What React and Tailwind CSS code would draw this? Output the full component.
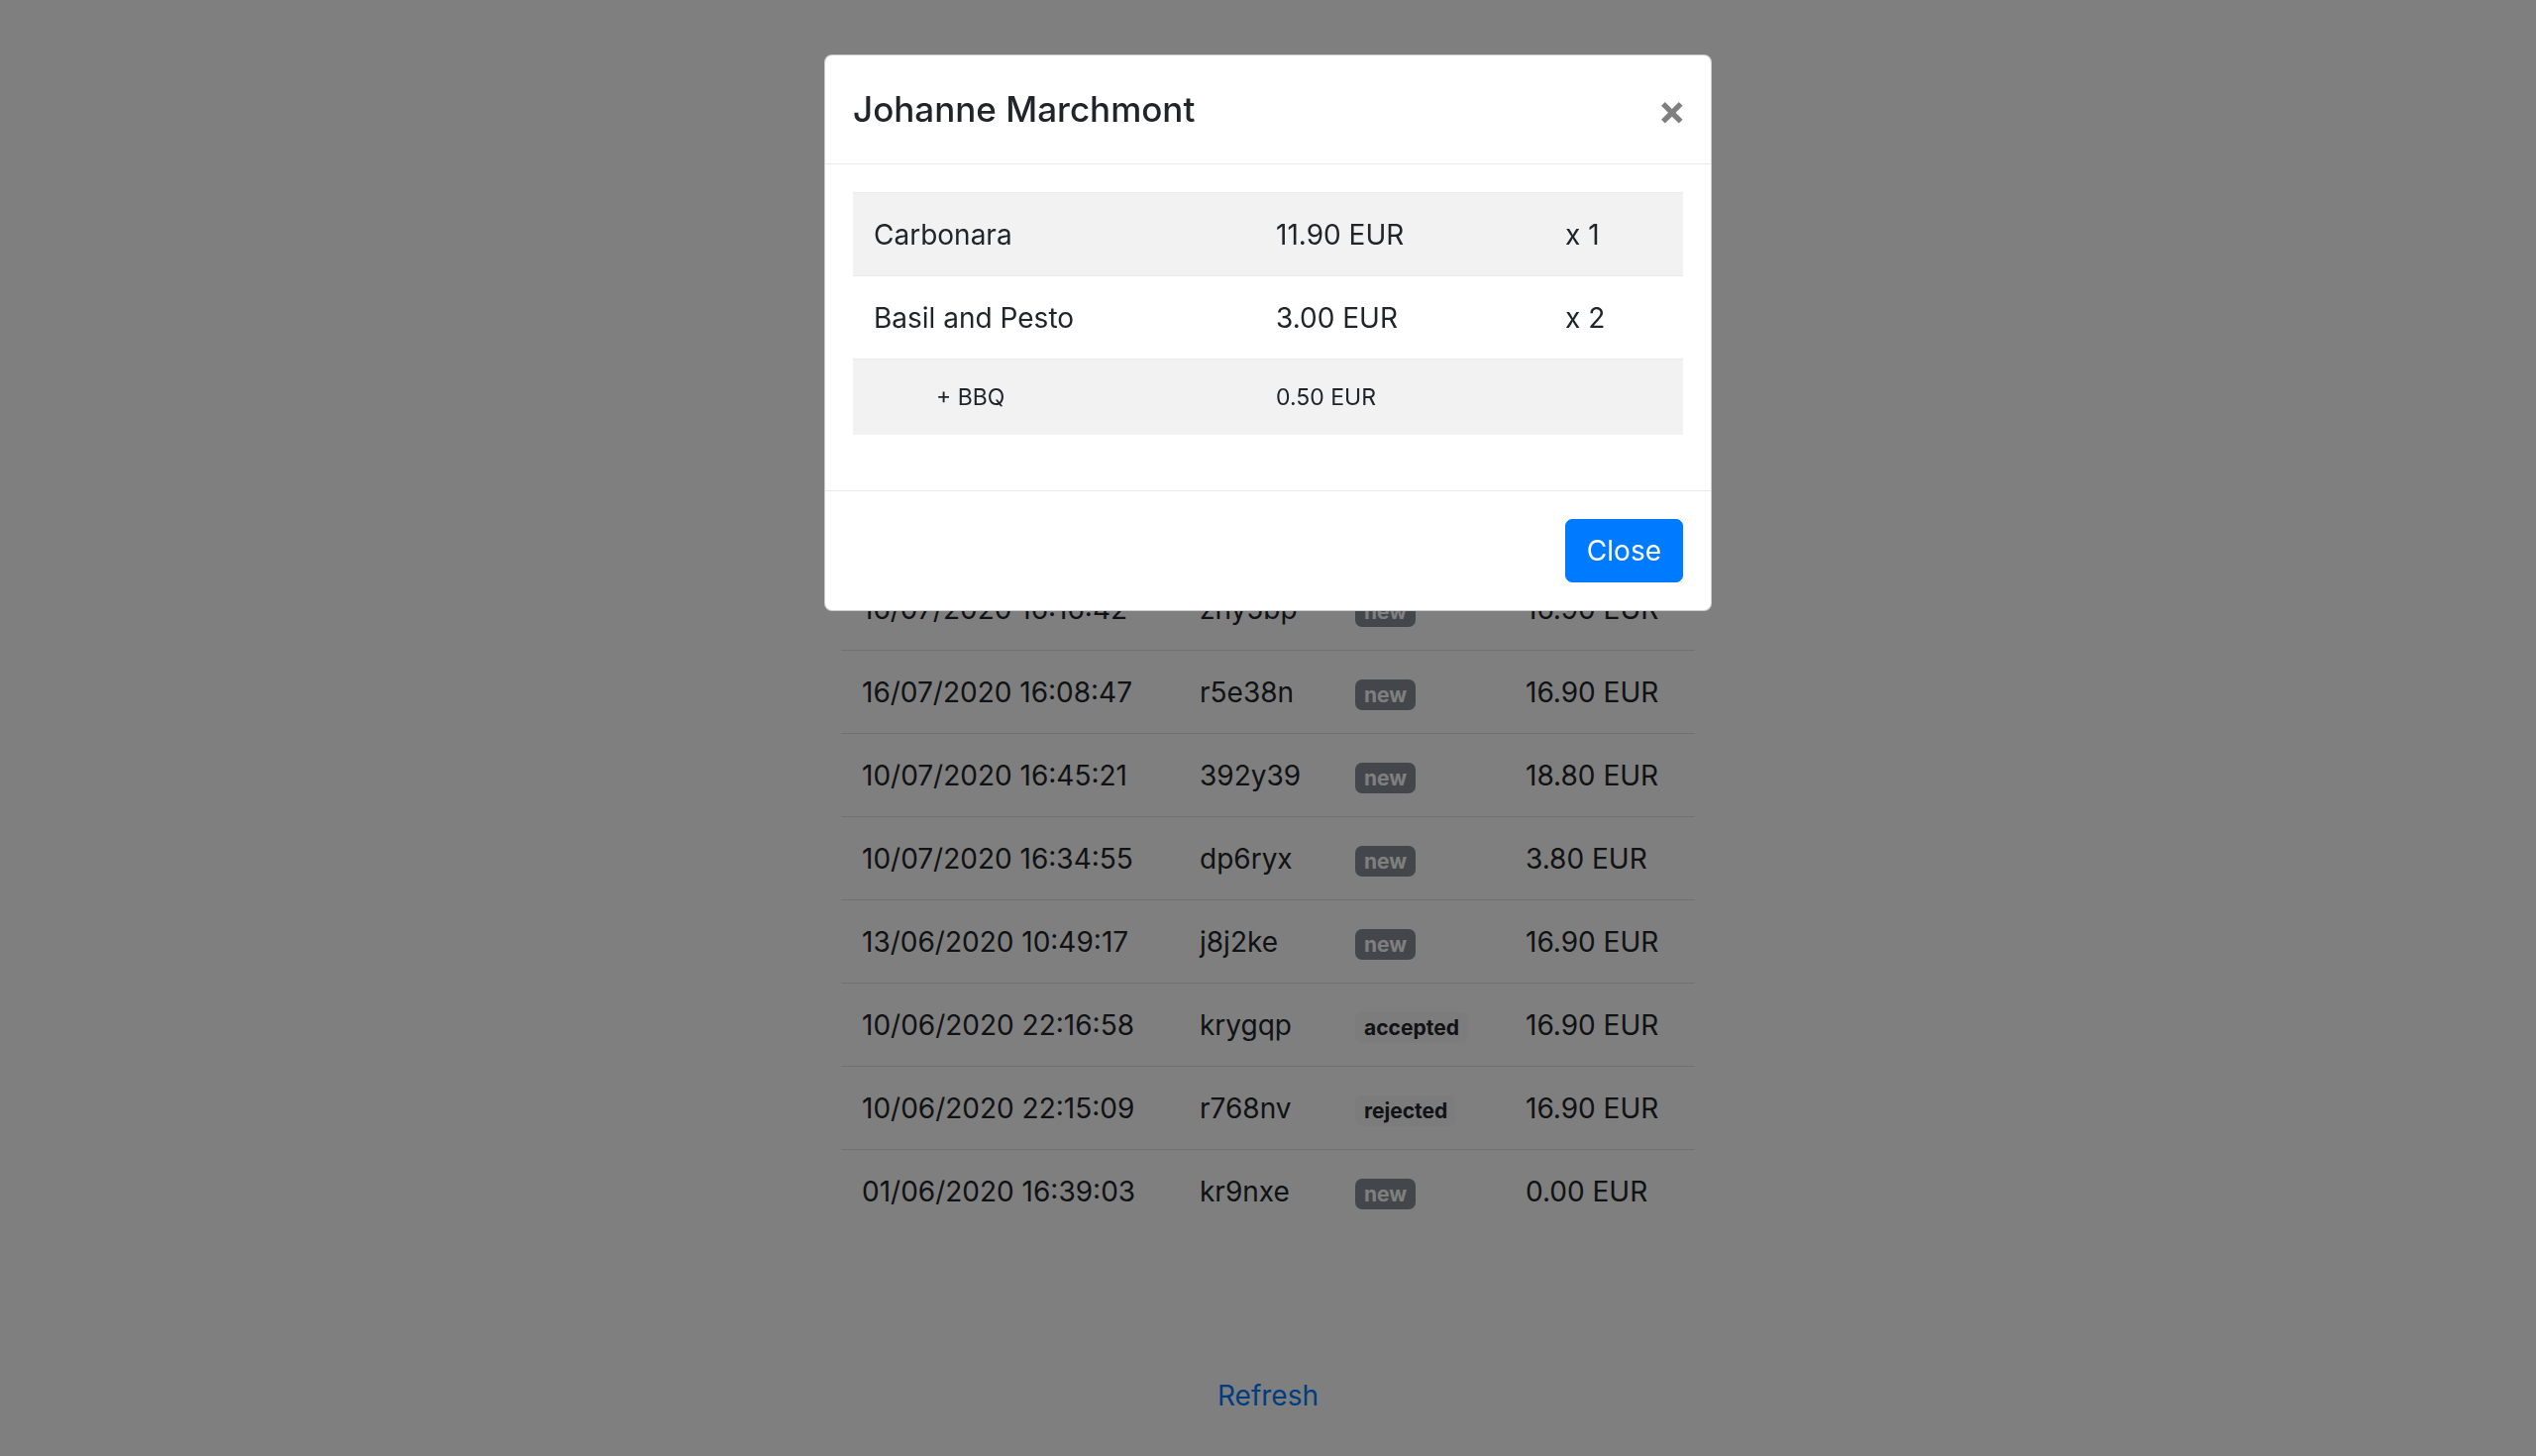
import React from 'react';

const orders = [
  { date: 'Date', code: 'Code', status: null, total: 'Total', head: true },
  { date: '17/07/2020 11:02:13', code: 'q7m2xa', status: 'new', total: '16.90 EUR' },
  { date: '17/07/2020 10:41:50', code: 'b3k9wd', status: 'new', total: '12.40 EUR' },
  { date: '16/07/2020 18:22:05', code: 'h6t1pc', status: 'new', total: '16.90 EUR' },
  { date: '16/07/2020 17:03:31', code: 'n2v8ru', status: 'new', total: '9.80 EUR' },
  { date: '16/07/2020 16:16:42', code: 'zhy5bp', status: 'new', total: '16.90 EUR' },
  { date: '16/07/2020 16:08:47', code: 'r5e38n', status: 'new', total: '16.90 EUR' },
  { date: '10/07/2020 16:45:21', code: '392y39', status: 'new', total: '18.80 EUR' },
  { date: '10/07/2020 16:34:55', code: 'dp6ryx', status: 'new', total: '3.80 EUR' },
  { date: '13/06/2020 10:49:17', code: 'j8j2ke', status: 'new', total: '16.90 EUR' },
  { date: '10/06/2020 22:16:58', code: 'krygqp', status: 'accepted', total: '16.90 EUR' },
  { date: '10/06/2020 22:15:09', code: 'r768nv', status: 'rejected', total: '16.90 EUR' },
  { date: '01/06/2020 16:39:03', code: 'kr9nxe', status: 'new', total: '0.00 EUR' },
];

const items = [
  { name: 'Carbonara', price: '11.90 EUR', qty: 'x 1', striped: true },
  { name: 'Basil and Pesto', price: '3.00 EUR', qty: 'x 2', striped: false },
  { name: '+ BBQ', price: '0.50 EUR', qty: '', striped: true, extra: true },
];

const StatusBadge = ({ status }) => {
  if (!status) return null;
  const light = status !== 'new';
  return (
    <span
      className={`inline-block rounded-[7px] px-[9px] py-[5px] text-[21px] font-bold leading-none ${
        light ? 'bg-[#f8f9fa] text-[#212529]' : 'bg-[#868e96] text-white'
      }`}
    >
      {status}
    </span>
  );
};

const OrderRow = ({ order, first }) => (
  <div
    className={`grid h-[84px] grid-cols-[341px_157px_172px_192px] items-center border-[#dee2e6] ${
      first ? '' : 'border-t'
    } ${order.head ? 'font-bold' : ''}`}
  >
    <div className="px-[21px]">{order.date}</div>
    <div className="px-[21px]">{order.code}</div>
    <div className="px-[21px]">
      <StatusBadge status={order.status} />
    </div>
    <div className="px-[21px]">{order.total}</div>
  </div>
);

const ItemRow = ({ item }) => (
  <div
    className={`grid grid-cols-[406px_292px_140px] items-center border-t border-[#e9ecef] ${
      item.striped ? 'bg-[#f2f2f2]' : 'bg-white'
    } ${item.extra ? 'h-[77px] text-[23px] leading-[35px]' : 'h-[84px] text-[28px] leading-[42px]'}`}
  >
    <div className={item.extra ? 'pl-[84px] pr-[21px]' : 'px-[21px]'}>{item.name}</div>
    <div className="px-[21px]">{item.price}</div>
    <div className="px-[21px]">{item.qty}</div>
  </div>
);

export default function App() {
  return (
    <div
      className="relative min-h-[1470px] bg-white text-[28px] leading-[42px] text-[#212529]"
      style={{ fontFamily: 'Inter, "Noto Sans", sans-serif' }}
    >
      {/* Orders page */}
      <div className="flex flex-col items-center pt-[152px]">
        <div className="w-[862px]">
          {orders.map((order, i) => (
            <OrderRow key={i} order={order} first={i === 0} />
          ))}
        </div>
        <a href="#" className="mt-[144px] text-[#007bff]">
          Refresh
        </a>
      </div>

      {/* Backdrop */}
      <div className="fixed inset-0 bg-black/50" />

      {/* Modal */}
      <div className="fixed inset-0 flex justify-center pt-[55px]">
        <div className="h-fit w-[896px] rounded-[8px] border border-black/20 bg-white">
          <div className="flex items-start justify-between border-b border-[#e9ecef] p-[28px]">
            <h5 className="text-[35px] font-medium leading-[52px]">Johanne Marchmont</h5>
            <button className="-mr-[3px] mt-[1px] text-[42px] font-bold leading-[52px] text-black/50">
              ×
            </button>
          </div>
          <div className="p-[28px]">
            <div className="mb-[28px]">
              {items.map((item, i) => (
                <ItemRow key={i} item={item} />
              ))}
            </div>
          </div>
          <div className="flex justify-end border-t border-[#e9ecef] p-[28px]">
            <button className="rounded-[7px] border border-[#007bff] bg-[#007bff] px-[21px] py-[10px] text-[28px] leading-[42px] text-white">
              Close
            </button>
          </div>
        </div>
      </div>
    </div>
  );
}
